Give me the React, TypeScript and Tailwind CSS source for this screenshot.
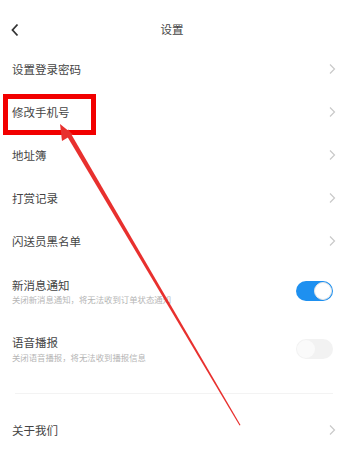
import React from "react";

const Chevron = () => (
  <svg width="8" height="12" viewBox="0 0 8 12" className="shrink-0">
    <polyline points="2,1.5 6.5,6 2,10.5" fill="none" stroke="#c9c9c9" strokeWidth="1.2" />
  </svg>
);

const Row = ({ label }: { label: string }) => (
  <div className="h-[43px] flex items-center justify-between pl-[12px] pr-[28px]">
    <span className="text-[11.5px] leading-[14px] text-[#444]">{label}</span>
    <Chevron />
  </div>
);

const Toggle = ({ on }: { on: boolean }) =>
  on ? (
    <div className="w-[37px] h-[20px] rounded-full bg-[#1e90f0] relative">
      <div className="absolute right-[1px] top-[1px] w-[18px] h-[18px] rounded-full bg-white border border-[#e6e6e6]" />
    </div>
  ) : (
    <div className="w-[37px] h-[20px] rounded-full bg-[#f2f2f2] relative">
      <div className="absolute left-[1px] top-[1px] w-[18px] h-[18px] rounded-full bg-[#fafafa]" />
    </div>
  );

export default function App() {
  return (
    <div
      className="relative w-[364px] h-[467px] overflow-hidden bg-white"
      style={{ fontFamily: '"Noto Sans CJK SC", "Noto Sans", sans-serif' }}
    >
      {/* header */}
      <div className="h-[47px] relative flex items-start justify-center pt-[20px] pr-[20px]">
        <svg width="10" height="14" viewBox="0 0 10 14" className="absolute left-[10px] top-[23px]">
          <polyline points="7.5,1.5 2.5,7 7.5,12.5" fill="none" stroke="#333" strokeWidth="1.8" />
        </svg>
        <span className="text-[11.5px] leading-[18px] text-[#444]">设置</span>
      </div>

      <Row label="设置登录密码" />
      <Row label="修改手机号" />
      <Row label="地址簿" />
      <Row label="打赏记录" />
      <Row label="闪送员黑名单" />

      <div className="h-[58px] flex items-center justify-between pl-[12px] pr-[31px]">
        <div className="flex flex-col">
          <span className="text-[11.5px] leading-[14px] text-[#444]">新消息通知</span>
          <span className="text-[8.4px] leading-[12px] text-[#b5b5b5] mt-[1px]">关闭新消息通知，将无法收到订单状态通知</span>
        </div>
        <Toggle on />
      </div>

      <div className="h-[58px] flex items-center justify-between pl-[12px] pr-[31px]">
        <div className="flex flex-col">
          <span className="text-[11.5px] leading-[14px] text-[#444]">语音播报</span>
          <span className="text-[8.4px] leading-[12px] text-[#b5b5b5] mt-[2px]">关闭语音播报，将无法收到播报信息</span>
        </div>
        <Toggle on={false} />
      </div>

      <div className="h-[30px] flex items-center px-[15px] pr-[31px]">
        <div className="h-px w-full bg-[#f3f3f3]" />
      </div>

      <Row label="关于我们" />
      <Row label="隐私协议" />

      {/* annotation overlay */}
      <div className="absolute left-[3px] top-[94px] w-[93px] h-[41px] border-[5px] border-[#f20000]" />
      <svg className="absolute left-0 top-0" width="364" height="467" viewBox="0 0 364 467">
        <polygon points="64.5,132 68.5,129.6 240.5,425 239.5,425.5" fill="#e8302e" />
        <polygon points="60,124 73,134.5 62,141" fill="#e8302e" />
      </svg>
    </div>
  );
}
